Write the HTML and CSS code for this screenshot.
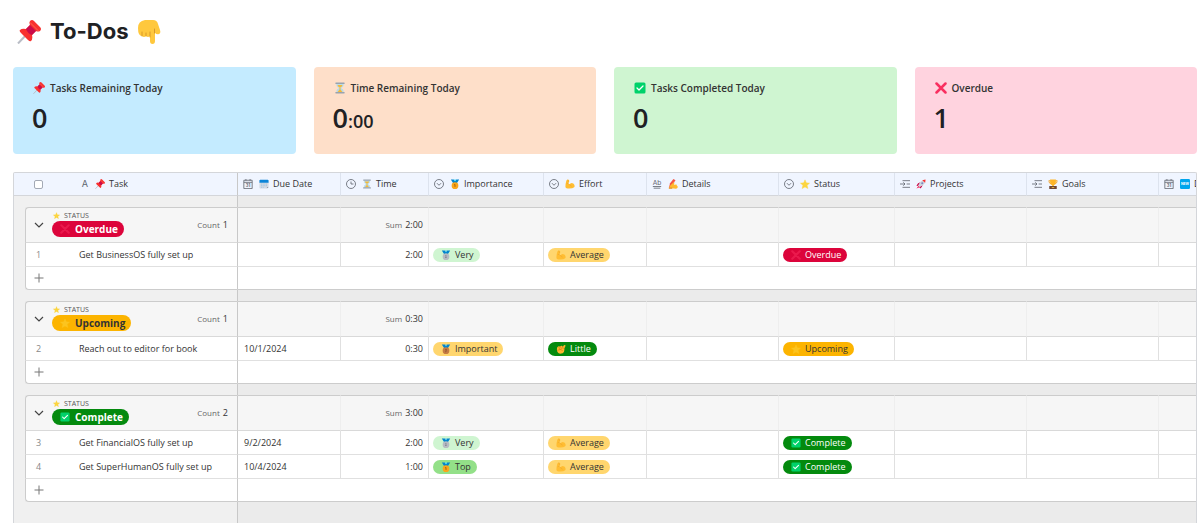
FILE: index.html
```html
<!DOCTYPE html>
<html lang="en">
<head>
<meta charset="utf-8">
<title>To-Dos</title>
<link rel="stylesheet" href="styles.css">
</head>
<body>
<svg class="sprite" aria-hidden="true">
  <symbol id="pin" viewBox="0 0 24 24"><path d="M10 14 1 23.500" stroke="#b9bdc6" stroke-width="2"/><path d="M13 1q2-2 4 0l6 6q2 2 0 4-2 1-4 0l-4 4q1 4-1 6-1 1-3-1L4 13q-2-2-1-3 2-2 6-1l4-4q-1-2 0-4Z" fill="#f8312f"/><path d="m13 5 6 6-4 4q-4-1-6-6Z" fill="#ca0b4a"/><path d="M13 2.500 21.500 11" stroke="#ff6550" stroke-width="1"/></symbol>
  <symbol id="point" viewBox="0 0 24 24"><path d="M1 8Q1 1 8 0h8q4 0 5 4l2 6q1 3-1 4-2 1-4-1v8q0 3-2.500 3T13 21v-5q-2 2-4 0-2 2-4 0-4 0-4-8Z" fill="#ffc83d"/><path d="M5 12v4M9 13v3M13 12v5M17.500 9v4" fill="none" stroke="#d99a28" stroke-width="1" stroke-linecap="round"/></symbol>
  <symbol id="hourglass" viewBox="0 0 24 24"><path d="M5 3h14v4q0 3-5 5 5 2 5 5v4H5v-4q0-3 5-5-5-2-5-5Z" fill="#b7dcec"/><path d="M7 6h10q0 3-5 5-5-2-5-5ZM11 11h2v4l4 5H7l4-5Z" fill="#f6b936"/><path d="M4 2.500h16M4 21.500h16" stroke="#9aa3ae" stroke-width="3" stroke-linecap="round"/></symbol>
  <symbol id="check" viewBox="0 0 24 24"><rect x="1" y="1" width="22" height="22" rx="3" fill="#00d26a"/><path d="m6 12 4 4 8-8" fill="none" stroke="#fff" stroke-width="2.500" stroke-linecap="round" stroke-linejoin="round"/></symbol>
  <symbol id="cross" viewBox="0 0 24 24"><path d="m3 3 18 18M21 3 3 21" stroke="#f92f60" stroke-width="5" stroke-linecap="round"/></symbol>
  <symbol id="calendar" viewBox="0 0 24 24"><path d="M1 8h22v12l-4 3H3q-2 0-2-2Z" fill="#d3d9e3"/><path d="M3 2h18q2 0 2 2v5H1V4q0-2 2-2Z" fill="#0b84d8"/><path d="M5 12h14M5 16h14M5 20h8" stroke="#8fc0e4" stroke-width="2" stroke-dasharray="2 2"/><path d="m19 23 4-4h-4Z" fill="#8a94a3"/></symbol>
  <symbol id="gold" viewBox="0 0 24 24"><path d="M2 1h7l3 4 3-4h7l-6 10H8Z" fill="#0084ce"/><path d="m9 1 3 5 3-5Z" fill="#50e2ff"/><circle cx="12" cy="16" r="8" fill="#f9a51a"/><path d="m10 14 2-1v6" fill="none" stroke="#9a5b10" stroke-width="2"/></symbol>
  <symbol id="silver" viewBox="0 0 24 24"><path d="M2 1h7l3 4 3-4h7l-6 10H8Z" fill="#0084ce"/><path d="m9 1 3 5 3-5Z" fill="#50c8e8"/><circle cx="12" cy="16" r="8" fill="#b7bbc3"/><path d="M10 14q3-2 3 0t-3 4h4" fill="none" stroke="#737985" stroke-width="1.500"/></symbol>
  <symbol id="bronze" viewBox="0 0 24 24"><path d="M2 1h7l3 4 3-4h7l-6 10H8Z" fill="#0084ce"/><path d="m9 1 3 5 3-5Z" fill="#50c8e8"/><circle cx="12" cy="16" r="8" fill="#c57b43"/><path d="M10 13h3l-1 3q3 1-2 3" fill="none" stroke="#6d4327" stroke-width="1.500"/></symbol>
  <symbol id="muscle" viewBox="0 0 24 24"><path d="M3 5q1-4 5-3 3 1 2 4l-2 4 2 3q5-6 10-2 5 5 2 9-3 3-12 3-8 0-9-4Q1 12 3 5Z" fill="#ffbd32"/><path d="m8 10-3 1m5 2q4 1 5 4M7 2l1 4" fill="none" stroke="#f0a52a" stroke-width="1.500" stroke-linecap="round"/></symbol>
  <symbol id="fist" viewBox="0 0 24 24"><path d="M3 8q3-4 6-2l4-2q3 0 3 3l3-4q3-2 4 1l-3 7q1 8-4 11-9 3-12-2Q1 15 3 8Z" fill="#ffb52e"/><path d="m7 8 2 5m2-7 2 6m-9 3 8-2 3 3m1-9 1 4" fill="none" stroke="#c87614" stroke-width="1.500" stroke-linecap="round"/></symbol>
  <symbol id="write" viewBox="0 0 24 24"><path d="m2 22 3-12L13 0l5 3-9 13Z" fill="#f45545"/><path d="m9 12 5-4q2 0 1 3l-1 3 6-1q2 1 1 3 3 0 2 2v3q-2 3-8 2l-12-1q-1-3 6-10Z" fill="#ffb92e"/><path d="M2 22h8" stroke="#e29127" stroke-width="3"/></symbol>
  <symbol id="star" viewBox="0 0 24 24"><path d="m12 2 3 7 8 1-6 5 2 8-7-4-7 4 2-8-6-5 8-1Z" fill="#fcd53f" stroke="#fcd53f" stroke-width="1" stroke-linejoin="round"/></symbol>
  <symbol id="rocket" viewBox="0 0 24 24"><path d="m5 10 6-2-6 9-4-1Zm9 9 2-6-8 7 2 3Z" fill="#ca0b4a"/><path d="M8 19 5 16Q9 6 16 3l6 5q-3 8-14 11Z" fill="#d0d2dc"/><path d="m15 3 8-2-1 8Z" fill="#f8312f"/><circle cx="15" cy="10" r="2.500" fill="#7b8cc0"/><path d="m6 16-5 7 8-3Z" fill="#f92f60"/></symbol>
  <symbol id="trophy" viewBox="0 0 24 24"><path d="M6 4H2q0 7 6 8m10-8h4q0 7-6 8" fill="none" stroke="#f0a020" stroke-width="2"/><path d="M5 1h14v7q0 6-5 7v4h-4v-4q-5-1-5-7Z" fill="#fdb528"/><path d="M3 17h18v7H3Z" fill="#6d4534"/><path d="M9 19h6v2H9Z" fill="#ffcf4a"/></symbol>
  <symbol id="new" viewBox="0 0 24 24"><rect width="24" height="24" rx="3" fill="#00a6ed"/><text x="12" y="15" text-anchor="middle" class="new-text">NEW</text></symbol>
  <symbol id="i-text" viewBox="0 0 12 12"><text x="6" y="10" text-anchor="middle" class="a-text">A</text></symbol>
  <symbol id="i-long" viewBox="0 0 12 12"><text x="6" y="7" text-anchor="middle" class="ab-text">Ab</text><path class="ln" d="M1 9h10M2 11h8"/></symbol>
  <symbol id="i-date" viewBox="0 0 12 12"><path class="ln" d="M1 1.500h10v10H1ZM1 4h10M3.500 0v2M8.500 0v2"/><text x="6" y="9.500" text-anchor="middle" class="date-text">31</text></symbol>
  <symbol id="i-time" viewBox="0 0 12 12"><circle class="ln" cx="6" cy="6" r="5.400"/><path class="ln" d="M6 3v3h3"/></symbol>
  <symbol id="i-select" viewBox="0 0 12 12"><circle class="ln" cx="6" cy="6" r="5.400"/><path class="ln" d="m3.500 5 2.500 2.500L8.500 5"/></symbol>
  <symbol id="i-look" viewBox="0 0 12 12"><path class="ln" d="M3 2h9M8 6h4M3 10h9M0 6h6M4 4l2 2-2 2"/></symbol>
  <symbol id="chev" viewBox="0 0 12 12"><path d="m2 4 4 4 4-4" fill="none" stroke="#444" stroke-width="1.200"/></symbol>
  <symbol id="plus" viewBox="0 0 12 12"><path d="M6 1.500v9M1.500 6h9" stroke="#777" stroke-width="1"/></symbol>
</svg>

<main class="page">
  <h1 class="title"><svg class="title-icon"><use href="#pin"/></svg>To-Dos<svg class="title-icon"><use href="#point"/></svg></h1>

  <section class="cards">
    <article class="card blue"><h2 class="card-label"><svg class="card-icon"><use href="#pin"/></svg>Tasks Remaining Today</h2><p class="card-value">0</p></article>
    <article class="card orange"><h2 class="card-label"><svg class="card-icon"><use href="#hourglass"/></svg>Time Remaining Today</h2><p class="card-value">0<span class="minutes">:00</span></p></article>
    <article class="card green"><h2 class="card-label"><svg class="card-icon"><use href="#check"/></svg>Tasks Completed Today</h2><p class="card-value">0</p></article>
    <article class="card pink"><h2 class="card-label"><svg class="card-icon"><use href="#cross"/></svg>Overdue</h2><p class="card-value">1</p></article>
  </section>

  <section class="grid">
    <table class="table">
      <colgroup><col class="w-gutter"><col class="w-num"><col class="w-task"><col class="w-due"><col class="w-time"><col class="w-imp"><col class="w-due"><col class="w-wide"><col class="w-status"><col class="w-wide"><col class="w-wide"><col class="w-wide"></colgroup>
      <thead>
        <tr class="head">
          <th class="bare"></th>
          <th class="bare center"><input class="tick" type="checkbox" aria-label="Select all tasks"></th>
          <th class="frozen"><div class="th task-th"><svg class="kind"><use href="#i-text"/></svg><svg class="emo"><use href="#pin"/></svg>Task</div></th>
          <th><div class="th"><svg class="kind"><use href="#i-date"/></svg><svg class="emo"><use href="#calendar"/></svg>Due Date</div></th>
          <th><div class="th"><svg class="kind"><use href="#i-time"/></svg><svg class="emo"><use href="#hourglass"/></svg>Time</div></th>
          <th><div class="th"><svg class="kind"><use href="#i-select"/></svg><svg class="emo"><use href="#gold"/></svg>Importance</div></th>
          <th><div class="th"><svg class="kind"><use href="#i-select"/></svg><svg class="emo"><use href="#muscle"/></svg>Effort</div></th>
          <th><div class="th"><svg class="kind"><use href="#i-long"/></svg><svg class="emo"><use href="#write"/></svg>Details</div></th>
          <th><div class="th"><svg class="kind"><use href="#i-select"/></svg><svg class="emo"><use href="#star"/></svg>Status</div></th>
          <th><div class="th"><svg class="kind"><use href="#i-look"/></svg><svg class="emo"><use href="#rocket"/></svg>Projects</div></th>
          <th><div class="th"><svg class="kind"><use href="#i-look"/></svg><svg class="emo"><use href="#trophy"/></svg>Goals</div></th>
          <th><div class="th"><svg class="kind"><use href="#i-date"/></svg><svg class="emo"><use href="#new"/></svg>Date</div></th>
        </tr>
      </thead>
      <tbody>
        <tr class="gap"><td class="gutter"></td><td class="frozen" colspan="2"></td><td colspan="9"></td></tr>
        <tr class="group">
          <td class="gutter"></td>
          <td class="frozen start" colspan="2"><div class="group-head"><button class="icon-btn" aria-label="Collapse Overdue"><svg class="act"><use href="#chev"/></svg></button><div class="group-name"><div class="caption"><svg class="mini"><use href="#star"/></svg>STATUS</div><span class="pill big red"><svg class="emo faded"><use href="#cross"/></svg>Overdue</span></div><div class="count">Count <b class="figure">1</b></div></div></td>
          <td></td><td class="sum">Sum <b class="figure">2:00</b></td><td></td><td></td><td></td><td></td><td></td><td></td><td></td>
        </tr>
        <tr class="row">
          <td class="gutter"></td><td class="num">1</td><td class="frozen name">Get BusinessOS fully set up</td><td></td><td class="right">2:00</td>
          <td><span class="pill mint"><svg class="emo"><use href="#silver"/></svg>Very</span></td>
          <td><span class="pill amber"><svg class="emo"><use href="#muscle"/></svg>Average</span></td><td></td>
          <td><span class="pill red"><svg class="emo faded"><use href="#cross"/></svg>Overdue</span></td><td></td><td></td><td></td>
        </tr>
        <tr class="add"><td class="gutter"></td><td class="frozen end" colspan="2"><button class="icon-btn" aria-label="Add overdue task"><svg class="act"><use href="#plus"/></svg></button></td><td colspan="9"></td></tr>
      </tbody>
      <tbody>
        <tr class="gap"><td class="gutter"></td><td class="frozen" colspan="2"></td><td colspan="9"></td></tr>
        <tr class="group">
          <td class="gutter"></td>
          <td class="frozen start" colspan="2"><div class="group-head"><button class="icon-btn" aria-label="Collapse Upcoming"><svg class="act"><use href="#chev"/></svg></button><div class="group-name"><div class="caption"><svg class="mini"><use href="#star"/></svg>STATUS</div><span class="pill big yellow"><svg class="emo faded"><use href="#star"/></svg>Upcoming</span></div><div class="count">Count <b class="figure">1</b></div></div></td>
          <td></td><td class="sum">Sum <b class="figure">0:30</b></td><td></td><td></td><td></td><td></td><td></td><td></td><td></td>
        </tr>
        <tr class="row">
          <td class="gutter"></td><td class="num">2</td><td class="frozen name">Reach out to editor for book</td><td class="date">10/1/2024</td><td class="right">0:30</td>
          <td><span class="pill amber"><svg class="emo"><use href="#bronze"/></svg>Important</span></td>
          <td><span class="pill dark"><svg class="emo"><use href="#fist"/></svg>Little</span></td><td></td>
          <td><span class="pill yellow"><svg class="emo faded"><use href="#star"/></svg>Upcoming</span></td><td></td><td></td><td></td>
        </tr>
        <tr class="add"><td class="gutter"></td><td class="frozen end" colspan="2"><button class="icon-btn" aria-label="Add upcoming task"><svg class="act"><use href="#plus"/></svg></button></td><td colspan="9"></td></tr>
      </tbody>
      <tbody>
        <tr class="gap"><td class="gutter"></td><td class="frozen" colspan="2"></td><td colspan="9"></td></tr>
        <tr class="group">
          <td class="gutter"></td>
          <td class="frozen start" colspan="2"><div class="group-head"><button class="icon-btn" aria-label="Collapse Complete"><svg class="act"><use href="#chev"/></svg></button><div class="group-name"><div class="caption"><svg class="mini"><use href="#star"/></svg>STATUS</div><span class="pill big dark"><svg class="emo"><use href="#check"/></svg>Complete</span></div><div class="count">Count <b class="figure">2</b></div></div></td>
          <td></td><td class="sum">Sum <b class="figure">3:00</b></td><td></td><td></td><td></td><td></td><td></td><td></td><td></td>
        </tr>
        <tr class="row">
          <td class="gutter"></td><td class="num">3</td><td class="frozen name">Get FinancialOS fully set up</td><td class="date">9/2/2024</td><td class="right">2:00</td>
          <td><span class="pill mint"><svg class="emo"><use href="#silver"/></svg>Very</span></td>
          <td><span class="pill amber"><svg class="emo"><use href="#muscle"/></svg>Average</span></td><td></td>
          <td><span class="pill dark"><svg class="emo"><use href="#check"/></svg>Complete</span></td><td></td><td></td><td></td>
        </tr>
        <tr class="row">
          <td class="gutter"></td><td class="num">4</td><td class="frozen name">Get SuperHumanOS fully set up</td><td class="date">10/4/2024</td><td class="right">1:00</td>
          <td><span class="pill leaf"><svg class="emo"><use href="#gold"/></svg>Top</span></td>
          <td><span class="pill amber"><svg class="emo"><use href="#muscle"/></svg>Average</span></td><td></td>
          <td><span class="pill dark"><svg class="emo"><use href="#check"/></svg>Complete</span></td><td></td><td></td><td></td>
        </tr>
        <tr class="add"><td class="gutter"></td><td class="frozen end" colspan="2"><button class="icon-btn" aria-label="Add complete task"><svg class="act"><use href="#plus"/></svg></button></td><td colspan="9"></td></tr>
      </tbody>
      <tfoot>
        <tr class="gap tail"><td class="gutter"></td><td class="frozen" colspan="2"></td><td colspan="9"></td></tr>
      </tfoot>
    </table>
  </section>
</main>
</body>
</html>
```
FILE: styles.css
```css
* { box-sizing: border-box; }
body {
  margin: 0;
  background: #fff;
  color: #333;
  font-family: "Open Sans", "Noto Sans", sans-serif;
  font-size: 9px;
  line-height: 14px;
}
.sprite { display: none; }
.page {
  height: 100vh;
  overflow: hidden;
  display: flex;
  flex-direction: column;
  padding: 16px 3px 0 13px;
}
.title {
  display: flex;
  align-items: center;
  gap: 9px;
  margin: 0 0 20px;
  padding-left: 4px;
  font: 700 22px/31px Inter, sans-serif;
  color: #202124;
}
.title-icon { width: 24px; height: 24px; }

.cards {
  display: grid;
  grid-template-columns: repeat(4, 1fr);
  gap: 18px;
  margin-bottom: 18px;
}
.card { min-height: 87px; padding: 13px 19px; border-radius: 4px; }
.blue { background: #c4ebff; }
.orange { background: #fedfc9; }
.green { background: #cff5d1; }
.pink { background: #ffd3df; }
.card-label {
  display: flex;
  align-items: center;
  gap: 5px;
  margin: 0;
  padding-left: 1px;
  font-size: 10px;
  font-weight: 600;
  line-height: 16px;
}
.card-icon { width: 12px; height: 12px; }
.card-value {
  margin: 4px 0 0;
  font-size: 27px;
  font-weight: 600;
  line-height: 36px;
  color: #202124;
}
.minutes { font-size: 18px; }

.grid {
  flex: 1;
  min-height: 0;
  overflow: hidden;
  border: 1px solid #d4d6da;
  border-bottom: 0;
  border-radius: 2px 2px 0 0;
  background: #ebebeb;
}
.table {
  width: 1276px;
  table-layout: fixed;
  border-collapse: separate;
  border-spacing: 0;
}
.w-gutter { width: 11px; }
.w-num { width: 26px; }
.w-task { width: 187px; }
.w-due { width: 103px; }
.w-time { width: 88px; }
.w-imp { width: 115px; }
.w-wide { width: 132px; }
.w-status { width: 116px; }

th, td { padding: 0; vertical-align: middle; white-space: nowrap; }
th {
  height: 23px;
  background: #f0f5ff;
  border-right: 1px solid #dde3ee;
  border-bottom: 1px solid #d4d6da;
  font-weight: 400;
  text-align: left;
}
.bare { border-right: 0; }
.tick {
  appearance: none;
  display: block;
  width: 9px;
  height: 9px;
  margin: 0 auto;
  border: 1px solid #a3a9b5;
  border-radius: 2px;
  background: #fff;
}
.th { display: flex; align-items: center; padding-left: 5px; }
.task-th { padding-left: 29px; }
.kind { flex: none; width: 10px; height: 10px; margin-right: 6px; }
.emo { flex: none; width: 10px; height: 10px; margin-right: 4px; }
.task-th .kind { margin-right: 5px; }

.gap td { height: 11px; background: #ebebeb; }
.gap .gutter, .gap .frozen, .gutter { background: #f0f0f0; }
.tail td { height: 80px; }

.group td { height: 36px; border-right: 1px solid #eee; }
.group td, .row td, .add td { border-bottom: 1px solid #d9d9d9; background: #fff; }
.group td { border-top: 1px solid #ccc; background: #f6f6f6; }
.row td { height: 24px; border-right: 1px solid #e0e0e0; }
.row td { border-bottom-color: #e0e0e0; }
.add td { height: 23px; border-bottom-color: #ccc; }
.group .gutter, .row .gutter, .add .gutter { border: 0; background: #f0f0f0; }
.group .start, .row .num, .add .end { border-left: 1px solid #ccc; }
.group .start { border-top-left-radius: 4px; }
.add .end { border-bottom-left-radius: 4px; }
th.frozen, td.frozen, .group .frozen, .row .frozen, .add .frozen { border-right: 1px solid #c8c8c8; }
.row .num { border-right: 0; color: #888; text-align: center; }
.name { padding-left: 28px; }
.date { padding-left: 6px; }
.right, .sum { padding-right: 5px; text-align: right; }
.sum, .count { color: #666; font-size: 8px; }
.figure { padding-left: 1px; color: #333; font-size: 9px; font-weight: 400; }

.group-head { display: flex; align-items: center; height: 34px; }
.group-name { padding-bottom: 4px; }
.icon-btn {
  display: grid;
  place-items: center;
  width: 26px;
  height: 14px;
  padding: 0;
  border: 0;
  background: none;
}
.act { width: 12px; height: 12px; }
.caption {
  display: flex;
  align-items: center;
  gap: 4px;
  height: 11px;
  font-size: 7px;
  line-height: 11px;
  color: #555;
}
.mini { width: 7px; height: 7px; margin-left: 1px; }
.count { margin-left: auto; padding-right: 9px; }

.pill {
  display: flex;
  align-items: center;
  width: fit-content;
  height: 14px;
  margin-left: 4px;
  padding: 0 6px 0 8px;
  border-radius: 7px;
}
.big {
  height: 16px;
  margin-left: 0;
  border-radius: 8px;
  font-size: 10px;
  font-weight: 700;
}
.big .emo { margin-right: 5px; }
.faded { opacity: .5; }
.mint { background: #cff5d1; }
.leaf { background: #93e088; }
.amber { background: #ffd66e; }
.yellow { background: #fcb400; }
.red { background: #dc043b; color: #fff; }
.dark { background: #048a0e; color: #fff; }

.ln { fill: none; stroke: #616670; stroke-width: 1; }
.a-text { font: 11px Inter, sans-serif; fill: #616670; }
.ab-text { font: 8px Inter, sans-serif; fill: #616670; }
.date-text { font: 700 5px Inter, sans-serif; fill: #616670; }
.new-text { font: 700 8px Inter, sans-serif; fill: #fff; }
```
